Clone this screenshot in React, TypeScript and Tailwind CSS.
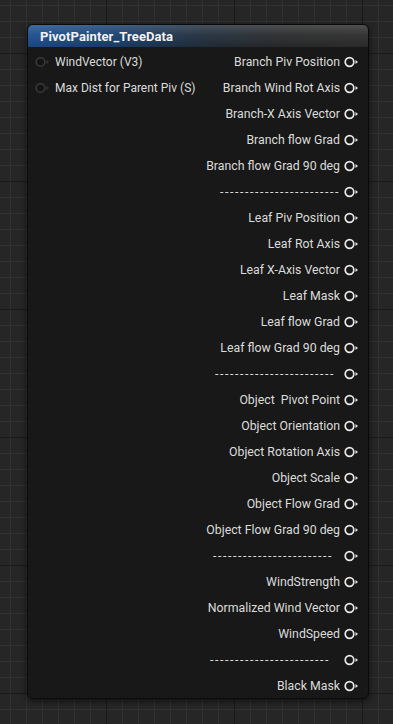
import React from "react";

const DASH = "------------------------";

const outputs: { label: string; pr?: number; dash?: boolean }[] = [
  { label: "Branch Piv Position" },
  { label: "Branch Wind Rot Axis" },
  { label: "Branch-X Axis Vector" },
  { label: "Branch flow Grad" },
  { label: "Branch flow Grad 90 deg" },
  { label: DASH, pr: 0, dash: true },
  { label: "Leaf Piv Position" },
  { label: "Leaf Rot Axis" },
  { label: "Leaf X-Axis Vector" },
  { label: "Leaf Mask" },
  { label: "Leaf flow Grad" },
  { label: "Leaf flow Grad 90 deg" },
  { label: DASH, pr: 5, dash: true },
  { label: "Object  Pivot Point" },
  { label: "Object Orientation" },
  { label: "Object Rotation Axis" },
  { label: "Object Scale" },
  { label: "Object Flow Grad" },
  { label: "Object Flow Grad 90 deg" },
  { label: DASH, pr: 7, dash: true },
  { label: "WindStrength" },
  { label: "Normalized Wind Vector" },
  { label: "WindSpeed" },
  { label: DASH, pr: 10, dash: true },
  { label: "Black Mask" },
];

const inputs = ["WindVector (V3)", "Max Dist for Parent Piv (S)"];

function OutPin() {
  return (
    <svg width="15" height="12" viewBox="0 0 15 12" className="shrink-0">
      <circle cx="5.5" cy="6" r="4.3" fill="none" stroke="#e8e8e8" strokeWidth="1.7" />
      <polygon points="11.5,4 14,6 11.5,8" fill="#e8e8e8" />
    </svg>
  );
}

function InPin() {
  return (
    <svg width="15" height="12" viewBox="0 0 15 12" className="shrink-0">
      <circle cx="5.5" cy="6" r="4.3" fill="#141414" stroke="#3a3a3a" strokeWidth="1.6" />
      <polygon points="11.5,4 14,6 11.5,8" fill="#3a3a3a" />
    </svg>
  );
}

export default function App() {
  return (
    <div
      className="w-[393px] h-[724px] overflow-hidden bg-[#262626] bg-[image:linear-gradient(to_right,#1a1a1a_1px,transparent_1px),linear-gradient(to_bottom,#1a1a1a_1px,transparent_1px),linear-gradient(to_right,#323232_1px,transparent_1px),linear-gradient(to_bottom,#323232_1px,transparent_1px)] bg-[size:128px_128px,128px_128px,16px_16px,16px_16px] bg-[position:106px_0,0_53px,10px_0,0_5px] pt-[24px] pl-[27px]"
      style={{ fontFamily: "Roboto, 'Noto Sans', sans-serif" }}
    >
      <div className="w-[342px] h-[675px] rounded-[6px] border border-[#0a0a0a] bg-[#171817]/[0.93] shadow-[0_2px_6px_rgba(0,0,0,0.6)] flex flex-col overflow-hidden">
        <div className="relative h-[22px] shrink-0 bg-[linear-gradient(to_right,#1e4f8f_0%,#1a4274_22%,#22303f_50%,#2b2c2d_75%,#2e2e2e_100%)] flex items-center pl-[12px]">
          <div className="absolute inset-0 bg-[linear-gradient(to_bottom,rgba(255,255,255,0.16)_0%,rgba(255,255,255,0.04)_45%,rgba(0,0,0,0.1)_100%)]" />
          <span className="relative text-[13px] font-bold text-[#f2f2f2] leading-none tracking-[0.1px]">
            PivotPainter_TreeData
          </span>
        </div>
        <div className="flex justify-between pt-[2px]">
          <div className="flex flex-col pl-[7px]">
            {inputs.map((t) => (
              <div key={t} className="h-[26px] flex items-center gap-[5px]">
                <InPin />
                <span className="text-[12px] text-[#dcdcdc] whitespace-pre">{t}</span>
              </div>
            ))}
          </div>
          <div className="flex flex-col items-end pr-[9px]">
            {outputs.map((o, i) => (
              <div key={i} className="h-[26px] flex items-center gap-[4px]">
                <span
                  className={
                    o.dash
                      ? "text-[12.3px] text-[#dcdcdc] whitespace-pre tracking-[1.6px]"
                      : "text-[12.3px] text-[#dcdcdc] whitespace-pre"
                  }
                  style={o.pr ? { paddingRight: o.pr } : undefined}
                >
                  {o.label}
                </span>
                <OutPin />
              </div>
            ))}
          </div>
        </div>
      </div>
    </div>
  );
}
